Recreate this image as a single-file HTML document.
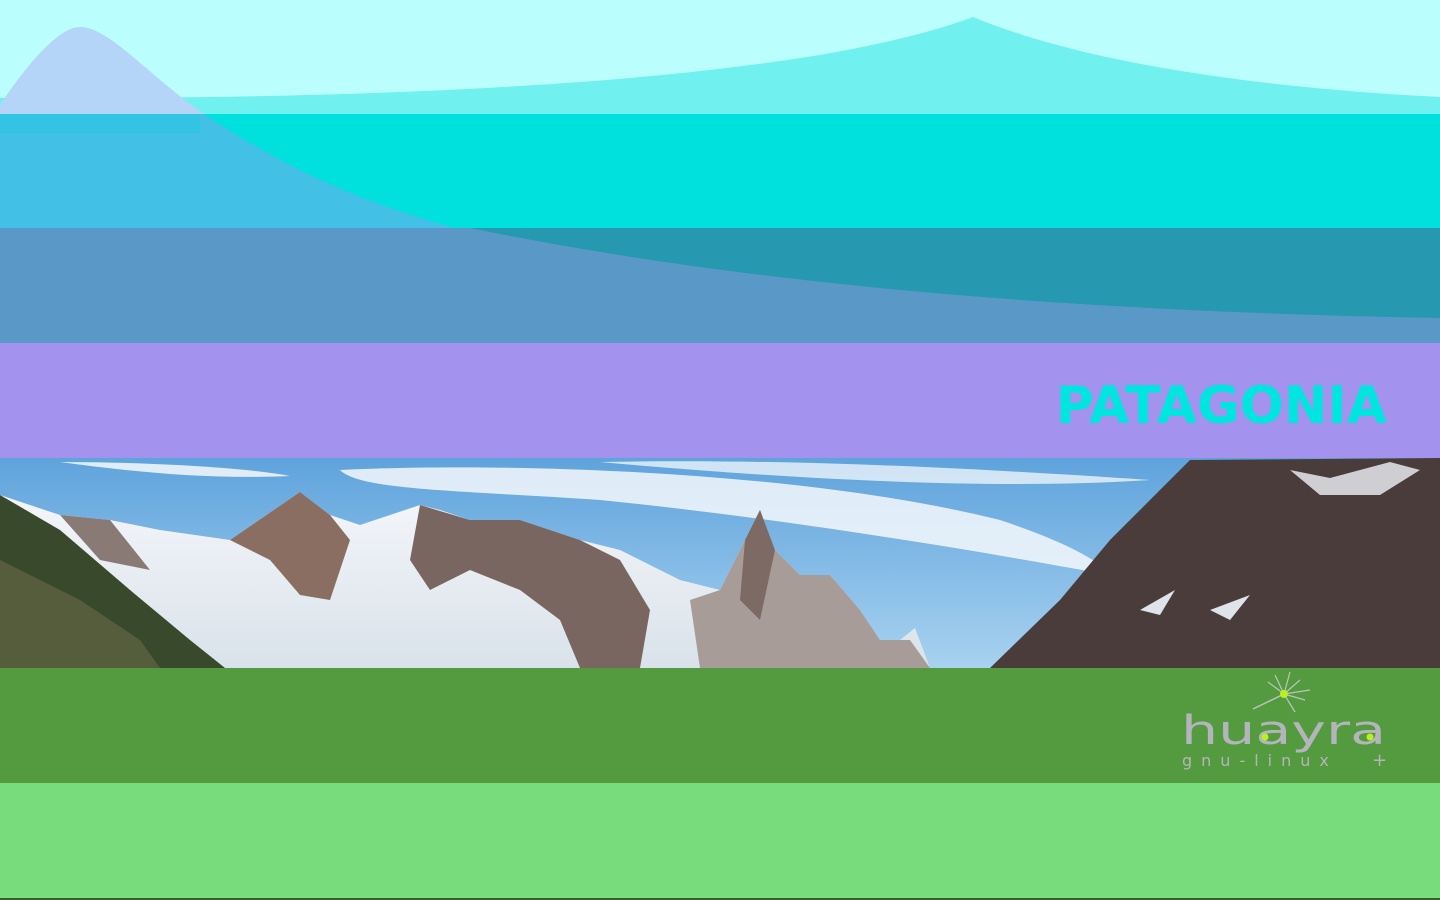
<!DOCTYPE html>
<html><head><meta charset="utf-8"><style>html,body{margin:0;padding:0;width:1440px;height:900px;overflow:hidden;background:#333}</style></head>
<body>
<svg width="1440" height="900" viewBox="0 0 1440 900" xmlns="http://www.w3.org/2000/svg">
<defs>
<clipPath id="b0"><rect x="0" y="0" width="1440" height="114"/></clipPath>
<clipPath id="b1"><rect x="0" y="114" width="1440" height="114"/></clipPath>
<clipPath id="b2"><rect x="0" y="228" width="1440" height="115"/></clipPath>
<linearGradient id="sky" x1="0" y1="0" x2="0" y2="1"><stop offset="0" stop-color="#5fa3dc"/><stop offset="1" stop-color="#a8d2f0"/></linearGradient>
<linearGradient id="snow" x1="0" y1="0" x2="0" y2="1"><stop offset="0" stop-color="#f4f6fa"/><stop offset="1" stop-color="#d9e2ea"/></linearGradient>
</defs>
<rect x="0" y="0" width="1440" height="114" fill="#bafefe"/>
<rect x="0" y="114" width="1440" height="114" fill="#00e1de"/>
<rect x="0" y="228" width="1440" height="115" fill="#5a98c8"/>
<rect x="0" y="343" width="1440" height="115" fill="#a393ee"/>
<rect x="0" y="668" width="1440" height="115" fill="#549b40"/>
<rect x="0" y="783" width="1440" height="115" fill="#78dc7c"/>
<rect x="0" y="898" width="1440" height="2" fill="#3a5a30"/>
<path d="M0,98 C400,100 800,82 973,17 C1100,70 1300,90 1440,97 L1440,114 L0,114 Z" fill="#70f0ee"/>
<g clip-path="url(#b2)"><path d="M470,228 C700,275 1000,310 1440,318 L1440,228 Z" fill="#2698b0"/></g>
<path d="M0,105 C30,60 60,27 80,27 C110,27 150,78 210,118 C320,190 420,228 620,265 C900,305 1200,316 1440,318 L1440,343 L0,343 Z" fill="#b4d4f8" clip-path="url(#b0)"/>
<path d="M0,105 C30,60 60,27 80,27 C110,27 150,78 210,118 C320,190 420,228 620,265 C900,305 1200,316 1440,318 L1440,343 L0,343 Z" fill="#42c0e6" clip-path="url(#b1)"/>
<rect x="0" y="114" width="200" height="19" fill="#26c8e0" opacity="0.5"/>
<path d="M0,105 C30,60 60,27 80,27 C110,27 150,78 210,118 C320,190 420,228 620,265 C900,305 1200,316 1440,318 L1440,343 L0,343 Z" fill="#5a98c8" clip-path="url(#b2)"/>
<text x="1387" y="423" text-anchor="end" font-family="DejaVu Sans, Liberation Sans, sans-serif" font-weight="bold" font-size="52" fill="#00e5e0">PATAGONIA</text>
<g>
<rect x="0" y="458" width="1440" height="210" fill="url(#sky)"/>
<path d="M60,462 C150,462 250,468 290,476 C200,480 120,470 60,462 Z" fill="#fff" opacity="0.8"/>
<path d="M340,470 C500,462 800,470 1000,520 C1060,540 1100,560 1110,575 C1000,555 800,520 600,500 C450,490 360,490 340,470 Z" fill="#f4f8fc" opacity="0.85"/>
<path d="M600,462 C800,458 1000,470 1150,480 C1000,490 800,480 600,462 Z" fill="#fff" opacity="0.7"/>
<path d="M0,495 L60,515 L110,520 L160,530 L230,540 L300,492 L330,515 L360,525 L420,505 L440,510 L470,520 L520,520 L580,540 L620,550 L680,580 L720,590 L745,540 L760,510 L775,550 L800,575 L830,575 L860,610 L880,640 L900,640 L915,628 L930,668 L0,668 Z" fill="url(#snow)"/>
<path d="M230,540 L300,492 L330,515 L350,540 L330,600 L300,595 L270,560 Z" fill="#8a6e62"/>
<path d="M420,505 L470,520 L520,520 L580,540 L620,560 L650,610 L640,668 L580,668 L560,620 L520,590 L470,570 L430,590 L410,560 Z" fill="#7a6660"/>
<path d="M60,515 L110,520 L150,570 L100,560 Z" fill="#8a7a76"/>
<path d="M690,600 L720,590 L745,540 L760,510 L775,550 L800,575 L830,575 L860,610 L880,640 L910,640 L930,668 L700,668 Z" fill="#a89c98"/>
<path d="M745,540 L760,510 L775,550 L760,620 L740,600 Z" fill="#7e6a64"/>
<path d="M0,495 L60,530 L130,590 L190,640 L225,668 L0,668 Z" fill="#394a2c"/>
<path d="M0,560 L80,600 L140,640 L160,668 L0,668 Z" fill="#6b6a4a" opacity="0.6"/>
<path d="M990,668 L1060,600 L1110,540 L1150,500 L1190,460 L1440,458 L1440,668 Z" fill="#4a3c3a"/>
<path d="M1290,470 L1330,478 L1390,462 L1420,470 L1380,495 L1320,495 Z" fill="#e6e8ee" opacity="0.85"/>
<path d="M1140,610 L1175,590 L1160,615 Z M1210,610 L1250,595 L1230,620 Z" fill="#dfe3ea"/>
</g>
<g stroke="#c8c8d0" stroke-width="1.2" opacity="0.9">
<line x1="1284" y1="694" x2="1275" y2="675"/><line x1="1284" y1="694" x2="1290" y2="672"/><line x1="1284" y1="694" x2="1300" y2="680"/>
<line x1="1284" y1="694" x2="1310" y2="690"/><line x1="1284" y1="694" x2="1305" y2="700"/><line x1="1284" y1="694" x2="1295" y2="712"/>
<line x1="1284" y1="694" x2="1268" y2="682"/><line x1="1284" y1="694" x2="1253" y2="709" stroke-width="1.5"/>
</g>
<circle cx="1284" cy="694" r="4" fill="#b8f020"/>
<text x="1181" y="744" font-family="DejaVu Sans, Liberation Sans, sans-serif" font-size="40" fill="#b4b4bc" textLength="205" lengthAdjust="spacingAndGlyphs">huayra</text>
<circle cx="1265" cy="737" r="3.5" fill="#b8f020"/><circle cx="1370" cy="737" r="3.5" fill="#b8f020"/>
<text x="1182" y="766" font-family="DejaVu Sans, Liberation Sans, sans-serif" font-size="16" fill="#b4b4bc" letter-spacing="9">gnu-linux</text>
<text x="1372" y="766" font-family="DejaVu Sans, sans-serif" font-size="18" fill="#b4b4bc">+</text>
</svg>
</body></html>
